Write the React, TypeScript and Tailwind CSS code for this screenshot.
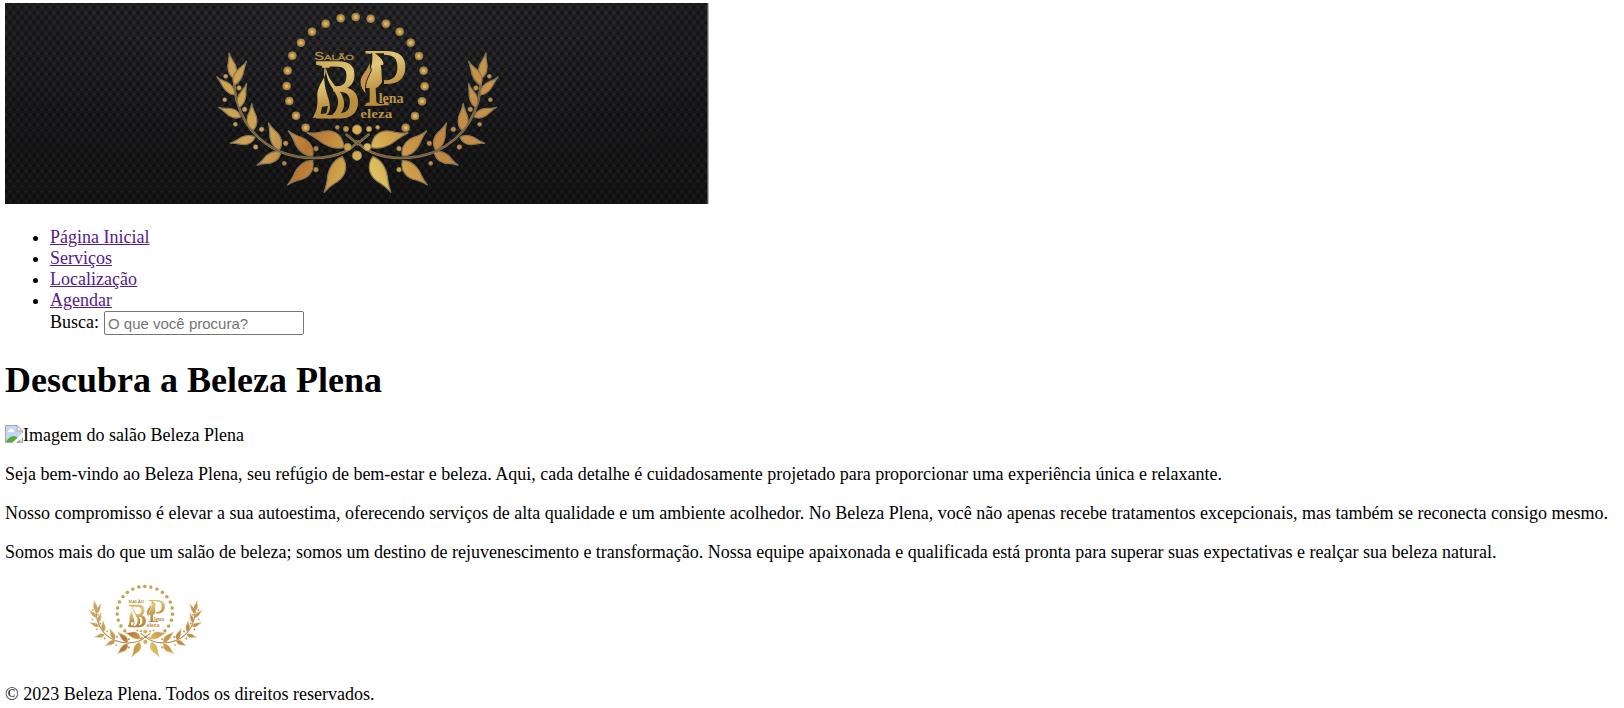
type Pt = [number, number];

const DOTS: Pt[] = [
  [467, 51], [512, 56], [422, 55], [558, 71], [377, 71], [599, 95], [336, 95],
  [632, 128], [303, 128], [657, 168], [277, 167], [671, 212], [263, 212],
  [674, 259], [260, 258], [666, 304], [268, 303], [645, 348], [288, 347],
  [617, 383], [317, 383],
];

const LEAVES: [number, number, number, number, number, number][] = [
  [102, 235, 87, 158, 11, 11], [103, 255, 140, 183, 13, 8], [103, 285, 50, 230, 8, 12],
  [119, 322, 140, 250, 12, 8], [122, 352, 55, 322, 9, 12], [160, 390, 155, 310, 15, 11],
  [165, 412, 90, 430, 13, 10], [238, 450, 205, 368, 12, 15], [242, 458, 170, 496, 13, 12],
  [338, 468, 264, 392, 14, 18], [338, 482, 262, 556, 20, 14], [432, 442, 320, 398, 12, 28],
  [427, 470, 372, 578, 25, 15],
];

const BERRIES: [number, number, number][] = [
  [77, 229, 6], [117, 264, 7], [74, 299, 6], [134, 328, 7], [106, 373, 6],
  [185, 388, 7], [167, 441, 7], [257, 430, 7], [253, 490, 6], [348, 446, 7],
  [348, 509, 7], [412, 382, 6], [438, 387, 8], [443, 441, 11],
];

function leaf(bx: number, by: number, tx: number, ty: number, l: number, r: number) {
  const dx = tx - bx;
  const dy = ty - by;
  const n = Math.hypot(dx, dy);
  const ux = -dy / n;
  const uy = dx / n;
  const p = (t: number, o: number) =>
    `${(bx + dx * t + ux * o).toFixed(1)} ${(by + dy * t + uy * o).toFixed(1)}`;
  return `M${bx} ${by}C${p(0.16, r * 1.4)} ${p(0.45, r * 1.4)} ${p(0.68, r * 0.6)}Q${p(0.84, r * 0.15)} ${tx} ${ty}Q${p(0.84, -l * 0.15)} ${p(0.68, -l * 0.6)}C${p(0.45, -l * 1.4)} ${p(0.16, -l * 1.4)} ${bx} ${by}Z`;
}

const STEM = "M102 228C100 330 150 415 240 455C310 482 385 478 430 457Q455 446 478 422M437 402L476 434";

function Branch({ id, right, edge }: { id: string; right?: boolean; edge: string }) {
  const fill = `url(#${id}-${right ? "right" : "left"})`;
  return (
    <g transform={right ? "translate(945 0) scale(-1 1)" : undefined}>
      <path d={STEM} fill="none" stroke={edge} strokeWidth="8" />
      <path d={STEM} fill="none" stroke="#74552f" strokeWidth="3" />
      {LEAVES.map((l, i) => (
        <path key={i} d={leaf(...l)} fill={fill} stroke={edge} strokeWidth="3.5" />
      ))}
      {BERRIES.map(([x, y, r], i) => (
        <circle key={i} cx={x} cy={y} r={r} fill={fill} stroke={edge} strokeWidth="2" />
      ))}
    </g>
  );
}

function Emblem({ id, edge, gap }: { id: string; edge: string; gap: string }) {
  const metal = `url(#${id}-metal)`;
  return (
    <g>
      <defs>
        <linearGradient id={`${id}-left`} gradientUnits="userSpaceOnUse" x1="50" y1="300" x2="450" y2="480">
          <stop offset="0" stopColor="#d0a252" />
          <stop offset="0.45" stopColor="#c9a055" />
          <stop offset="0.7" stopColor="#b87532" />
          <stop offset="1" stopColor="#cfa74b" />
        </linearGradient>
        <linearGradient id={`${id}-right`} gradientUnits="userSpaceOnUse" x1="50" y1="300" x2="450" y2="480">
          <stop offset="0" stopColor="#c79448" />
          <stop offset="0.5" stopColor="#c28641" />
          <stop offset="0.75" stopColor="#cf9c48" />
          <stop offset="1" stopColor="#e0c260" />
        </linearGradient>
        <linearGradient id={`${id}-metal`} gradientUnits="userSpaceOnUse" x1="400" y1="170" x2="470" y2="370">
          <stop offset="0" stopColor="#d0ad58" />
          <stop offset="0.3" stopColor="#e0c878" />
          <stop offset="0.65" stopColor="#bd903f" />
          <stop offset="1" stopColor="#b3873a" />
        </linearGradient>
      </defs>
      {DOTS.map(([x, y], i) => (
        <g key={i}>
          <circle cx={x} cy={y} r="12" fill="#b58f45" stroke={edge} strokeWidth="2" />
          <circle cx={x} cy={y} r="6" fill="#e2b356" />
        </g>
      ))}
      <Branch id={id} edge={edge} />
      <Branch id={id} edge={edge} right />
      <circle cx="471" cy="389" r="14" fill="#dcae50" stroke={edge} strokeWidth="3" />
      <circle cx="471" cy="467" r="14" fill="#d5ad4e" stroke={edge} strokeWidth="3" />
      <g fill={metal} fontFamily="'Liberation Serif', serif">
        <text x="344" y="355" fontSize="252" textLength="138" lengthAdjust="spacingAndGlyphs" stroke={metal} strokeWidth="4">B</text>
        <text x="490" y="314" fontSize="250" textLength="136" lengthAdjust="spacingAndGlyphs">P</text>
        <text x="343" y="179" fontFamily="'Liberation Sans', sans-serif" fill="#b39048" stroke="#b39048" fontSize="24" textLength="119" lengthAdjust="spacingAndGlyphs">
          <tspan fontSize="31">S</tspan>ALÃO
        </text>
      </g>
      <path d="M366 203H400V345H338L354 300Z" fill={gap} />
      <path d="M374 196C388 236 350 246 352 292C354 318 350 334 338 354C368 354 390 348 390 322C390 290 366 270 374 196Z" fill={metal} />
      <path d="M378 204C376 262 426 278 412 320Q406 342 384 356C436 352 444 306 418 272C400 252 386 238 378 204Z" fill={metal} />
      <path d="M366 320L384 318L379 340L362 342Z" fill={gap} />
      <path d="M512 160H552V312H508Z" fill={gap} />
      <path d="M516 152C544 172 553 186 550 194L542 196L544 206L546 246Q536 262 527 264L529 306L544 317H492L509 306V264C484 268 484 246 500 226C514 206 520 190 516 152Z" fill={metal} />
      <path d="M508 180C508 208 480 222 480 246Q480 266 500 284C490 254 504 234 514 212Z" fill="#c4924b" stroke={gap} strokeWidth="3" />
      <g fill="#bd9344" fontFamily="'Liberation Serif', serif" fontWeight="bold">
        <text x="536" y="308" fontSize="43" textLength="75" lengthAdjust="spacingAndGlyphs">lena</text>
        <text x="481" y="355" fontSize="39" textLength="96" lengthAdjust="spacingAndGlyphs">eleza</text>
      </g>
    </g>
  );
}

function Banner() {
  return (
    <svg className="block h-[201px] w-[704px]" viewBox="5 3 704 201" role="img" aria-label="Beleza Plena">
      <defs>
        <linearGradient id="banner-shade" x1="0" y1="0" x2="0" y2="1">
          <stop offset="0" stopColor="#28282a" />
          <stop offset="0.5" stopColor="#1c1c1e" />
          <stop offset="1" stopColor="#151515" />
        </linearGradient>
        <radialGradient id="banner-side" cx="0.5" cy="0.3" r="0.6">
          <stop offset="0" stopColor="#111113" stopOpacity="0" />
          <stop offset="1" stopColor="#111113" stopOpacity="0.5" />
        </radialGradient>
        <pattern id="banner-weave" width="8" height="10.2" patternUnits="userSpaceOnUse">
          <circle cx="2" cy="2.5" r="1.7" fill="#000" fillOpacity="0.45" />
          <circle cx="6" cy="7.6" r="1.7" fill="#000" fillOpacity="0.45" />
          <circle cx="6" cy="2.5" r="1.4" fill="#fff" fillOpacity="0.08" />
          <circle cx="2" cy="7.6" r="1.4" fill="#fff" fillOpacity="0.08" />
        </pattern>
      </defs>
      <rect x="5" y="3" width="703" height="201" fill="url(#banner-shade)" />
      <rect x="5" y="3" width="703" height="201" fill="url(#banner-weave)" />
      <rect x="5" y="3" width="703" height="201" fill="url(#banner-side)" />
      <rect x="707.5" y="3" width="1.2" height="201" fill="#999" />
      <g transform="translate(200 0) scale(0.33333)">
        <Emblem id="banner" edge="#857654" gap="#1c1c1d" />
      </g>
    </svg>
  );
}

function FooterLogo() {
  return (
    <svg className="block h-[88px] w-[281px]" viewBox="5 580 281 88" role="img" aria-label="Beleza Plena">
      <g transform="translate(82.5 578.6) scale(0.1335)">
        <Emblem id="footer" edge="#cdb27a" gap="#fff" />
      </g>
    </svg>
  );
}

function BrokenImage() {
  return (
    <svg className="h-[18px] w-[18px] shrink-0" viewBox="0 0 18 18">
      <path d="M.5 .5H12L17.5 6V17.5H.5Z" fill="#c5d6f5" stroke="#a8a8a8" />
      <path d="M12 .5V6H17.5Z" fill="#fff" stroke="#a8a8a8" />
      <path d="M3 6.5Q3 5 4.500 5Q5 3 6.500 3.500Q8.500 3.500 8.500 5.500Q9.500 6 9 7H3Z" fill="#fff" />
      <path d="M1 17Q4 11 9 11Q13 11 15 17Z" fill="#57ab3b" />
      <path d="M18 7.500L7 18H11L18 12Z" fill="#fff" />
    </svg>
  );
}

const LINKS = ["Página Inicial", "Serviços", "Localização", "Agendar"];

export default function App() {
  return (
    <div className="h-[708px] w-[1624px] overflow-hidden bg-white pt-[3px] pl-[5px] font-['Liberation_Serif',serif] text-[18px] leading-[21px] text-black">
      <Banner />
      <nav className="mt-[23px]">
        <ul className="list-disc pl-[45px]">
          {LINKS.map((label) => (
            <li key={label}>
              <a href="#" className="text-[#551a8b] underline">{label}</a>
            </li>
          ))}
        </ul>
        <div className="flex h-[24px] items-start pl-[45px]">
          <label htmlFor="busca" className="mt-px mr-[5px]">Busca:</label>
          <input
            id="busca"
            type="text"
            placeholder="O que você procura?"
            className="h-[24px] w-[200px] rounded-[2px] border border-[#767676] bg-white px-[3px] font-['Liberation_Sans',sans-serif] text-[15px] placeholder:text-[#757575]"
          />
        </div>
      </nav>
      <main>
        <h1 className="mt-[25px] text-[36px] leading-[41px] font-bold">Descubra a Beleza Plena</h1>
        <div className="mt-[24px] flex h-[21px] items-start">
          <BrokenImage />
          <span>Imagem do salão Beleza Plena</span>
        </div>
        <p className="mt-[18px] whitespace-nowrap">Seja bem-vindo ao Beleza Plena, seu refúgio de bem-estar e beleza. Aqui, cada detalhe é cuidadosamente projetado para proporcionar uma experiência única e relaxante.</p>
        <p className="mt-[18px] whitespace-nowrap">Nosso compromisso é elevar a sua autoestima, oferecendo serviços de alta qualidade e um ambiente acolhedor. No Beleza Plena, você não apenas recebe tratamentos excepcionais, mas também se reconecta consigo mesmo.</p>
        <p className="mt-[18px] whitespace-nowrap">Somos mais do que um salão de beleza; somos um destino de rejuvenescimento e transformação. Nossa equipe apaixonada e qualificada está pronta para superar suas expectativas e realçar sua beleza natural.</p>
      </main>
      <footer className="mt-[18px]">
        <FooterLogo />
        <p className="mt-[15px]">© 2023 Beleza Plena. Todos os direitos reservados.</p>
      </footer>
    </div>
  );
}
